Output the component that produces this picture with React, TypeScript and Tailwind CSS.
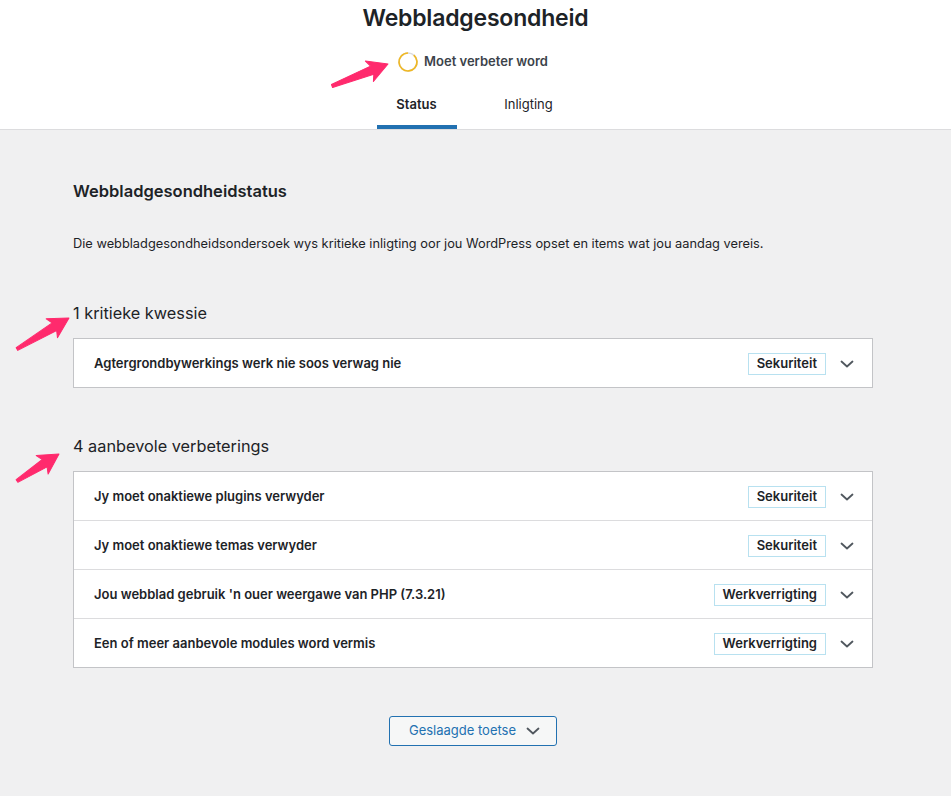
import React from "react";

const font = { fontFamily: "Inter, 'Noto Sans', sans-serif" };

function Chevron({ className = "" }: { className?: string }) {
  return (
    <svg width="18" height="18" viewBox="0 0 18 18" className={className} fill="none">
      <path d="M3.5 6.5 L9 11.5 L14.5 6.5" stroke="#50575e" strokeWidth="1.8" strokeLinecap="round" strokeLinejoin="round" />
    </svg>
  );
}

function Arrow({ x1, y1, x2, y2 }: { x1: number; y1: number; x2: number; y2: number }) {
  const L = Math.hypot(x2 - x1, y2 - y1);
  const a = (Math.atan2(y2 - y1, x2 - x1) * 180) / Math.PI;
  const pts = [
    [0, -1.6],
    [L - 17, -4.4],
    [L - 20, -11],
    [L, 0],
    [L - 20, 11],
    [L - 17, 4.4],
    [0, 1.6],
  ]
    .map((p) => p.join(","))
    .join(" ");
  return (
    <g transform={`translate(${x1} ${y1}) rotate(${a})`}>
      <polygon points={pts} fill="#ff2a6d" stroke="#ff2a6d" strokeWidth="1" strokeLinejoin="round" />
    </g>
  );
}

type Item = { title: string; badge: string };

function Row({ item, last }: { item: Item; last: boolean }) {
  return (
    <div className={`flex items-center pl-5 pr-[16px] pt-[1px] ${last ? "h-[48px]" : "h-[49px] border-b border-[#dcdcde]"}`}>
      <span className="flex-1 text-[13px] font-semibold text-[#1d2327]">{item.title}</span>
      <span className="border border-[#b8e1f0] px-[8px] h-[22px] flex items-center text-[13px] font-semibold text-[#1d2327]">
        {item.badge}
      </span>
      <Chevron className="ml-[12px]" />
    </div>
  );
}

function Group({ heading, items }: { heading: string; items: Item[] }) {
  return (
    <section>
      <h3 className="text-[16.3px] leading-[24px] text-[#1d2327] h-[24px]">{heading}</h3>
      <div className="mt-[13px] border border-[#c3c4c7] bg-white">
        {items.map((it, i) => (
          <Row key={it.title} item={it} last={i === items.length - 1} />
        ))}
      </div>
    </section>
  );
}

export default function App() {
  const critical: Item[] = [{ title: "Agtergrondbywerkings werk nie soos verwag nie", badge: "Sekuriteit" }];
  const recommended: Item[] = [
    { title: "Jy moet onaktiewe plugins verwyder", badge: "Sekuriteit" },
    { title: "Jy moet onaktiewe temas verwyder", badge: "Sekuriteit" },
    { title: "Jou webblad gebruik 'n ouer weergawe van PHP (7.3.21)", badge: "Werkverrigting" },
    { title: "Een of meer aanbevole modules word vermis", badge: "Werkverrigting" },
  ];

  return (
    <div className="relative w-[951px] h-[796px] overflow-hidden bg-[#f0f0f1] text-[#1d2327]" style={font}>
      <header className="bg-white border-b border-[#dcdcde]">
        <h1 className="h-[34px] pt-[2px] flex items-center justify-center text-[23px] font-semibold tracking-[-0.2px]">
          Webbladgesondheid
        </h1>
        <div className="mt-[16px] h-[24px] flex items-center justify-center gap-[5px] pr-[6px]">
          <svg width="22" height="22" viewBox="0 0 22 22">
            <circle cx="11" cy="11" r="9" fill="none" stroke="#dcdcde" strokeWidth="1.7" />
            <circle
              cx="11"
              cy="11"
              r="9"
              fill="none"
              stroke="#f0b823"
              strokeWidth="1.7"
              strokeDasharray="50 56.5"
              transform="rotate(-50 11 11)"
            />
          </svg>
          <span className="text-[13px] font-semibold text-[#3c434a]">Moet verbeter word</span>
        </div>
        <nav className="mt-[7px] flex justify-center pr-[6px]">
          <a className="mx-4 w-[80px] h-[48px] flex items-center justify-center border-b-4 border-[#2271b1] pt-[4px] text-[13px] font-semibold text-[#1d2327]">
            Status
          </a>
          <a className="mx-4 w-[80px] h-[48px] flex items-center justify-center border-b-4 border-transparent pt-[4px] text-[13px] text-[#1d2327]">
            Inligting
          </a>
        </nav>
      </header>

      <main className="w-[800px] ml-[73px]">
        <h2 className="mt-[49px] h-[24px] flex items-center text-[16.5px] font-semibold">Webbladgesondheidstatus</h2>
        <p className="mt-[31px] h-[20px] flex items-center text-[12.8px] text-[#1d2327]">
          Die webbladgesondheidsondersoek wys kritieke inligting oor jou WordPress opset en items wat jou aandag vereis.
        </p>
        <div className="mt-[47px]">
          <Group heading="1 kritieke kwessie" items={critical} />
        </div>
        <div className="mt-[46px]">
          <Group heading="4 aanbevole verbeterings" items={recommended} />
        </div>
        <div className="mt-[48px] flex justify-center">
          <button className="w-[168px] h-[30px] flex items-center justify-center gap-[8px] rounded-[3px] border border-[#2271b1] bg-[#f6f7f7] pl-[5px] text-[13px] text-[#2271b1]">
            Geslaagde toetse
            <Chevron />
          </button>
        </div>
      </main>

      <svg className="absolute inset-0 pointer-events-none" width="951" height="796">
        <Arrow x1={332} y1={86} x2={388} y2={64} />
        <Arrow x1={17} y1={349} x2={69} y2={318} />
        <Arrow x1={17} y1={481} x2={59} y2={454} />
      </svg>
    </div>
  );
}
